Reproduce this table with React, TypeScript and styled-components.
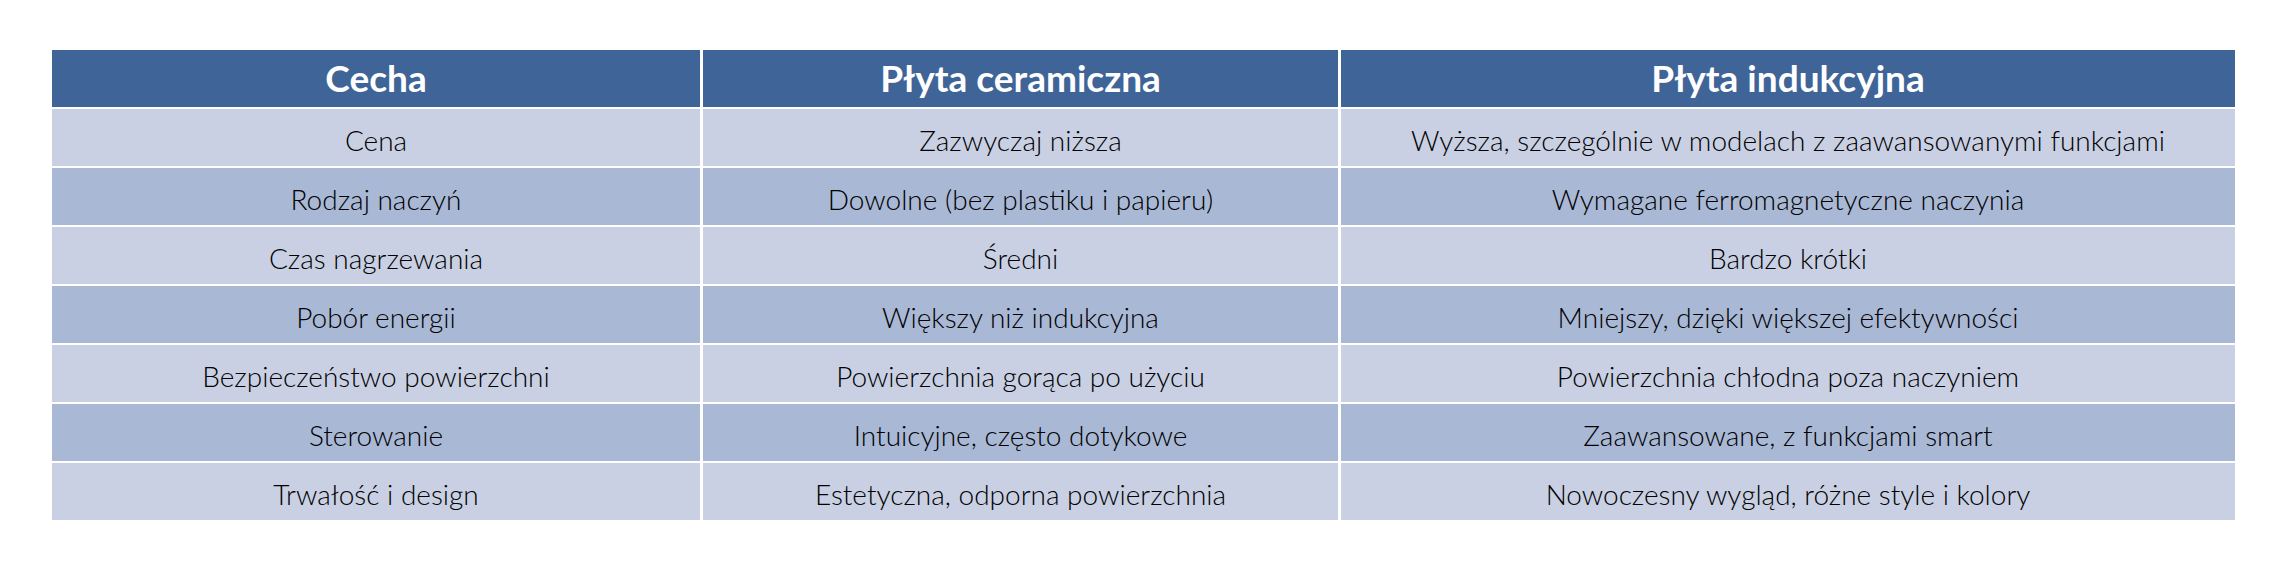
import { createGlobalStyle } from 'styled-components';
import styled from 'styled-components';

const GlobalStyle = createGlobalStyle`
    html, body {
        margin: 0;
        padding: 0;
        background: #FFFFFF;
    }
`

const Page = styled.div`
    padding: 50px 0 0 52px;
    width: 2289px;
    height: 579px;
    box-sizing: border-box;
    font-family: Lato, "Liberation Sans", sans-serif;
`

const Table = styled.div`
    display: flex;
    flex-direction: column;
    gap: 2px;
    width: 2183px;
`

const Row = styled.div`
    display: grid;
    grid-template-columns: 648px 635px 894px;
    column-gap: 3px;
    height: 57px;
`

const HeadCell = styled.div`
    display: flex;
    align-items: center;
    justify-content: center;
    background: #3F6598;
    color: #FFFFFF;
    font-weight: 700;
    font-size: 37px;
    padding-bottom: 2px;
`

const Cell = styled.div<{ $shade: boolean }>`
    display: flex;
    align-items: center;
    justify-content: center;
    background: ${p => p.$shade ? '#A9B8D5' : '#C9D0E3'};
    color: #000000;
    font-weight: 300;
    font-size: 28px;
    padding-top: 4px;
`

const rows: string[][] = [
    ['Cena', 'Zazwyczaj niższa', 'Wyższa, szczególnie w modelach z zaawansowanymi funkcjami'],
    ['Rodzaj naczyń', 'Dowolne (bez plastiku i papieru)', 'Wymagane ferromagnetyczne naczynia'],
    ['Czas nagrzewania', 'Średni', 'Bardzo krótki'],
    ['Pobór energii', 'Większy niż indukcyjna', 'Mniejszy, dzięki większej efektywności'],
    ['Bezpieczeństwo powierzchni', 'Powierzchnia gorąca po użyciu', 'Powierzchnia chłodna poza naczyniem'],
    ['Sterowanie', 'Intuicyjne, często dotykowe', 'Zaawansowane, z funkcjami smart'],
    ['Trwałość i design', 'Estetyczna, odporna powierzchnia', 'Nowoczesny wygląd, różne style i kolory'],
]

export default function App() {
    return (
        <Page>
            <GlobalStyle />
            <Table>
                <Row>
                    <HeadCell>Cecha</HeadCell>
                    <HeadCell>Płyta ceramiczna</HeadCell>
                    <HeadCell>Płyta indukcyjna</HeadCell>
                </Row>
                {rows.map((r, i) => (
                    <Row key={r[0]}>
                        {r.map(text => (
                            <Cell key={text} $shade={i % 2 === 1}>{text}</Cell>
                        ))}
                    </Row>
                ))}
            </Table>
        </Page>
    )
}
